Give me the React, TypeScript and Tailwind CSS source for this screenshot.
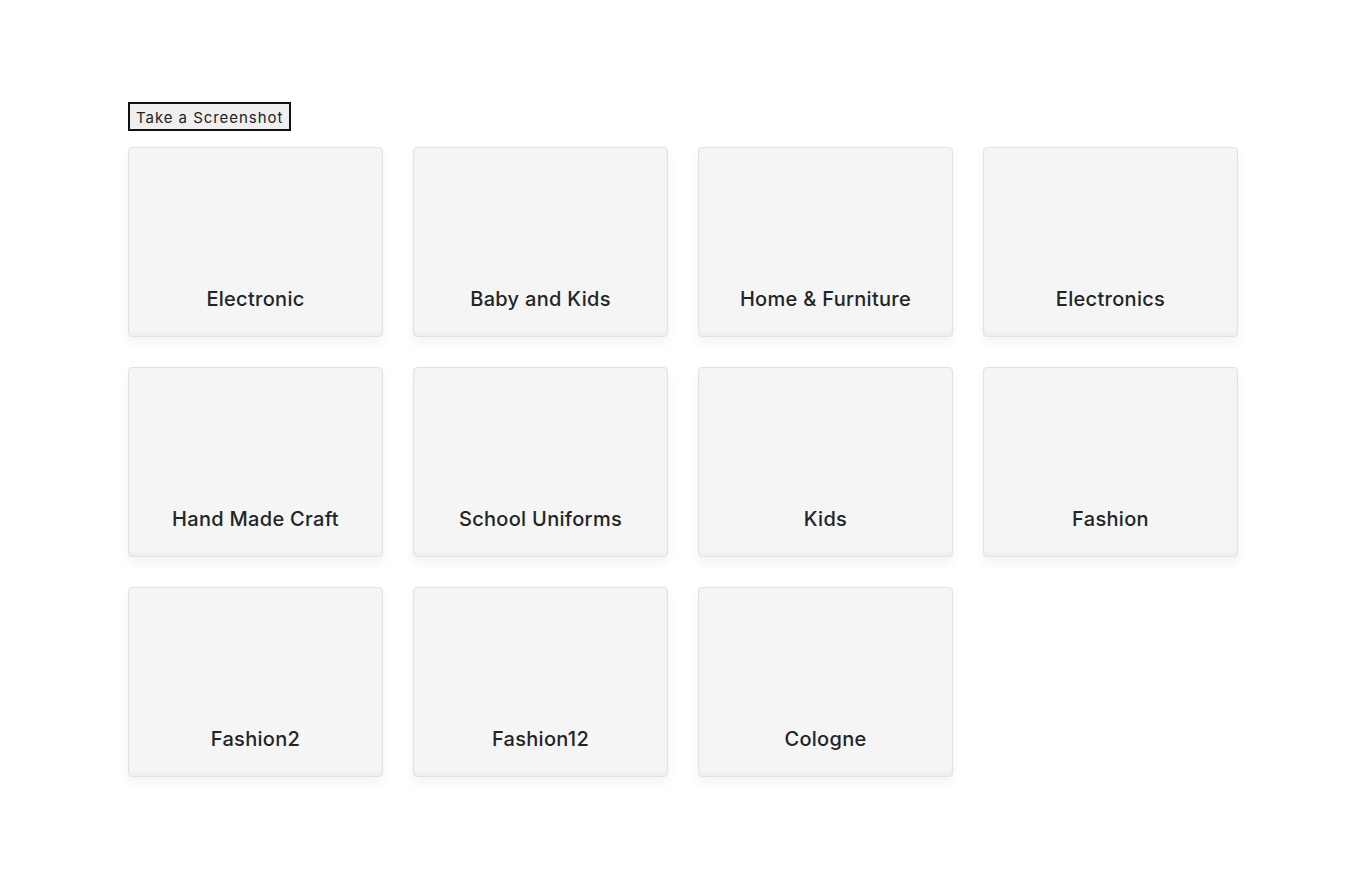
const categories = [
  "Electronic",
  "Baby and Kids",
  "Home & Furniture",
  "Electronics",
  "Hand Made Craft",
  "School Uniforms",
  "Kids",
  "Fashion",
  "Fashion2",
  "Fashion12",
  "Cologne",
];

const App = () => {
  return (
    <div className="min-h-screen bg-white font-['Inter','Noto_Sans',sans-serif] text-[#212529]">
      <div className="mx-auto w-[1110px] pt-[102px]">
        <button className="h-[29px] border-2 border-[#111] bg-[#efefef] px-[6px] pt-[2px] text-[15px] leading-none tracking-[0.95px] text-[#222]">
          Take a Screenshot
        </button>

        {/* category cards */}
        <div className="mt-[16px] grid grid-cols-4 gap-[30px]">
          {categories.map((name) => (
            <div
              key={name}
              className="flex h-[190px] flex-col items-center justify-end rounded-[4px] border border-[#e2e2e2] bg-[#f5f5f5] pb-[22px] shadow-[0_6px_12px_rgba(0,0,0,0.05),inset_0_-3px_3px_rgba(0,0,0,0.03)]"
            >
              <span className="text-[20px] font-medium tracking-[0.3px]">{name}</span>
            </div>
          ))}
        </div>
      </div>
    </div>
  );
};

export default App;
